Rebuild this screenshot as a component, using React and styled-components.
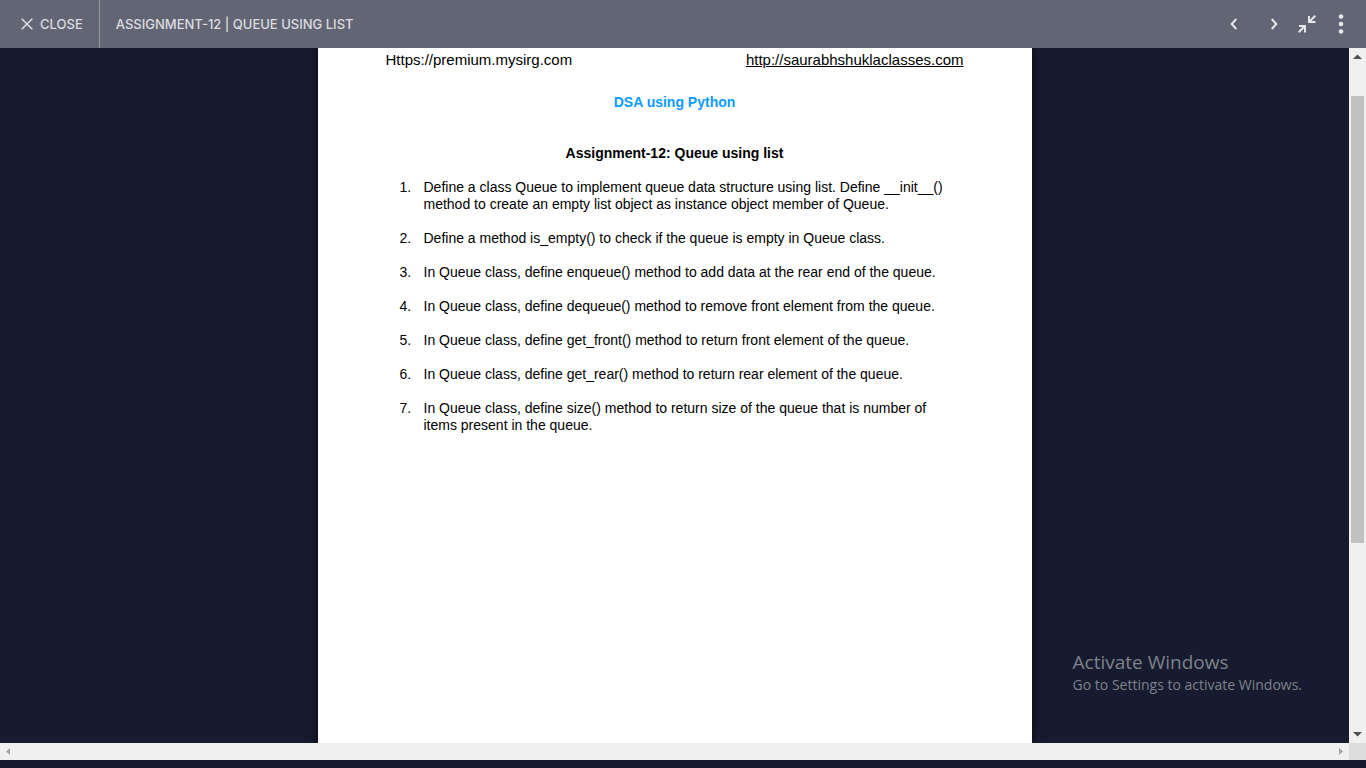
import React from "react";
import styled, { createGlobalStyle } from "styled-components";

const GlobalStyle = createGlobalStyle`
  *, *::before, *::after { box-sizing: border-box; }
  body { margin: 0; background: #161b2f; }
`;

const Shell = styled.div`
  position: relative;
  display: flex;
  flex-direction: column;
  height: 100vh;
  padding-bottom: 8px;
  overflow: hidden;
  background: #161b2f;
  font-family: "Liberation Sans", Arial, sans-serif;
`;

const Toolbar = styled.header`
  display: flex;
  align-items: center;
  flex: none;
  height: 48px;
  background: #626573;
  color: #dcdde1;
  font: 500 13px/20px Inter, sans-serif;
`;

const CloseButton = styled.button`
  display: flex;
  align-items: center;
  gap: 7px;
  height: 100%;
  padding: 0 16px 0 21px;
  border: 0;
  border-right: 1px solid #92949e;
  background: none;
  color: inherit;
  font: inherit;
`;

const ToolbarTitle = styled.h1`
  flex: 1;
  margin: 0;
  padding-left: 16px;
  font: inherit;
`;

const Actions = styled.nav`
  display: flex;
  align-items: center;
  padding-right: 4px;
`;

const IconButton = styled.button`
  display: flex;
  align-items: center;
  justify-content: center;
  width: ${(p) => p.$width}px;
  height: 48px;
  padding: 0;
  border: 0;
  background: none;
  color: #e6e7ea;
`;

const Viewer = styled.main`
  display: grid;
  grid-template: minmax(0, 1fr) 17px / minmax(0, 1fr) 17px;
  flex: 1;
  min-height: 0;
`;

const Viewport = styled.div`
  display: flex;
  justify-content: center;
  overflow: hidden;
`;

const Page = styled.article`
  width: 100%;
  max-width: 714px;
  padding: 3px 68px 0;
  background: #fff;
  color: #000;
  box-shadow: 0 0 9px rgba(0, 0, 0, 0.7);
  font-size: 14px;
  line-height: 17px;
`;

const PageHeader = styled.div`
  display: flex;
  justify-content: space-between;
  font-size: 15px;
`;

const SiteLink = styled.a`
  color: inherit;
  text-decoration: ${(p) => (p.$underlined ? "underline" : "none")};
`;

const Course = styled.h2`
  margin: 26px 0 34px;
  color: #0c9bff;
  font-size: 14px;
  text-align: center;
`;

const Heading = styled.h3`
  margin: 0 0 17px;
  font-size: 14px;
  text-align: center;
`;

const Questions = styled.ol`
  display: flex;
  flex-direction: column;
  gap: 17px;
  margin: 0;
  padding: 0;
  list-style: none;
`;

const Question = styled.li`
  display: grid;
  grid-template-columns: 24px 1fr;
  padding-left: 14px;
`;

const ScrollTrack = styled.div`
  display: flex;
  flex-direction: ${(p) => (p.$vertical ? "column" : "row")};
  align-items: center;
  justify-content: space-between;
  background: #f0f0f0;
`;

const Arrow = styled.svg`
  display: block;
  flex: none;
  width: 17px;
  height: 17px;
  fill: ${(p) => (p.$muted ? "#a3a3a3" : "#505050")};
`;

const ThumbArea = styled.div`
  flex: 1;
  width: 13px;
  padding-top: 31px;
`;

const Thumb = styled.div`
  height: 71%;
  background: #c1c1c1;
`;

const Corner = styled.div`
  background: #dcdcdc;
`;

const Watermark = styled.aside`
  position: absolute;
  right: 64px;
  bottom: 73px;
  color: #7f828a;
  font-family: "Open Sans", sans-serif;
  font-size: 14px;
  line-height: 20px;
`;

const WatermarkTitle = styled.div`
  font-size: 19px;
  line-height: 26px;
`;

const QUESTIONS = [
  ["Define a class Queue to implement queue data structure using list. Define __init__()", "method to create an empty list object as instance object member of Queue."],
  ["Define a method is_empty() to check if the queue is empty in Queue class."],
  ["In Queue class, define enqueue() method to add data at the rear end of the queue."],
  ["In Queue class, define dequeue() method to remove front element from the queue."],
  ["In Queue class, define get_front() method to return front element of the queue."],
  ["In Queue class, define get_rear() method to return rear element of the queue."],
  ["In Queue class, define size() method to return size of the queue that is number of", "items present in the queue."],
];

export default function App() {
  return (
    <Shell>
      <GlobalStyle />
      <Toolbar>
        <CloseButton>
          <svg width="12" height="12" viewBox="0 0 12 12" stroke="currentColor" strokeWidth="1.6" aria-hidden="true">
            <path d="M.7.7l10.6 10.6M11.3.7L.7 11.3" />
          </svg>
          CLOSE
        </CloseButton>
        <ToolbarTitle>ASSIGNMENT-12 | QUEUE USING LIST</ToolbarTitle>
        <Actions>
          <IconButton $width={40} aria-label="Previous">
            <svg width="8" height="12" viewBox="0 0 8 12" fill="none" stroke="currentColor" strokeWidth="2">
              <path d="M6.3 1L1.7 6l4.6 5" />
            </svg>
          </IconButton>
          <IconButton $width={40} aria-label="Next">
            <svg width="8" height="12" viewBox="0 0 8 12" fill="none" stroke="currentColor" strokeWidth="2">
              <path d="M1.7 1l4.6 5-4.6 5" />
            </svg>
          </IconButton>
          <IconButton $width={26} aria-label="Exit full screen">
            <svg width="18" height="18" viewBox="0 0 18 18" fill="none" stroke="currentColor" strokeWidth="2">
              <path d="M17.300.7l-6 6M11 1v6h6.500M.7 17.300l6-6M1 11h6v6.500" />
            </svg>
          </IconButton>
          <IconButton $width={42} aria-label="More options">
            <svg width="6" height="20" viewBox="0 0 6 20" fill="currentColor">
              <circle cx="3" cy="2.5" r="2.3" />
              <circle cx="3" cy="10" r="2.3" />
              <circle cx="3" cy="17.5" r="2.3" />
            </svg>
          </IconButton>
        </Actions>
      </Toolbar>
      <Viewer>
        <Viewport>
          <Page>
            <PageHeader>
              <SiteLink href="https://premium.mysirg.com">Https://premium.mysirg.com</SiteLink>
              <SiteLink $underlined href="http://saurabhshuklaclasses.com">http://saurabhshuklaclasses.com</SiteLink>
            </PageHeader>
            <Course>DSA using Python</Course>
            <Heading>Assignment-12: Queue using list</Heading>
            <Questions>
              {QUESTIONS.map((lines, i) => (
                <Question key={i}>
                  <span>{i + 1}.</span>
                  <span>
                    {lines.map((line, n) => (
                      <React.Fragment key={n}>
                        {n > 0 && <br />}
                        {line}
                      </React.Fragment>
                    ))}
                  </span>
                </Question>
              ))}
            </Questions>
          </Page>
        </Viewport>
        <ScrollTrack $vertical>
          <Arrow viewBox="0 0 17 17"><path d="M4 11l4.500-4.500L13 11z" /></Arrow>
          <ThumbArea><Thumb /></ThumbArea>
          <Arrow viewBox="0 0 17 17"><path d="M4 6l4.500 4.500L13 6z" /></Arrow>
        </ScrollTrack>
        <ScrollTrack>
          <Arrow $muted viewBox="0 0 17 17"><path d="M10 5L6 8.500l4 3.500z" /></Arrow>
          <Arrow $muted viewBox="0 0 17 17"><path d="M7 5l4 3.500L7 12z" /></Arrow>
        </ScrollTrack>
        <Corner />
      </Viewer>
      <Watermark>
        <WatermarkTitle>Activate Windows</WatermarkTitle>
        Go to Settings to activate Windows.
      </Watermark>
    </Shell>
  );
}
